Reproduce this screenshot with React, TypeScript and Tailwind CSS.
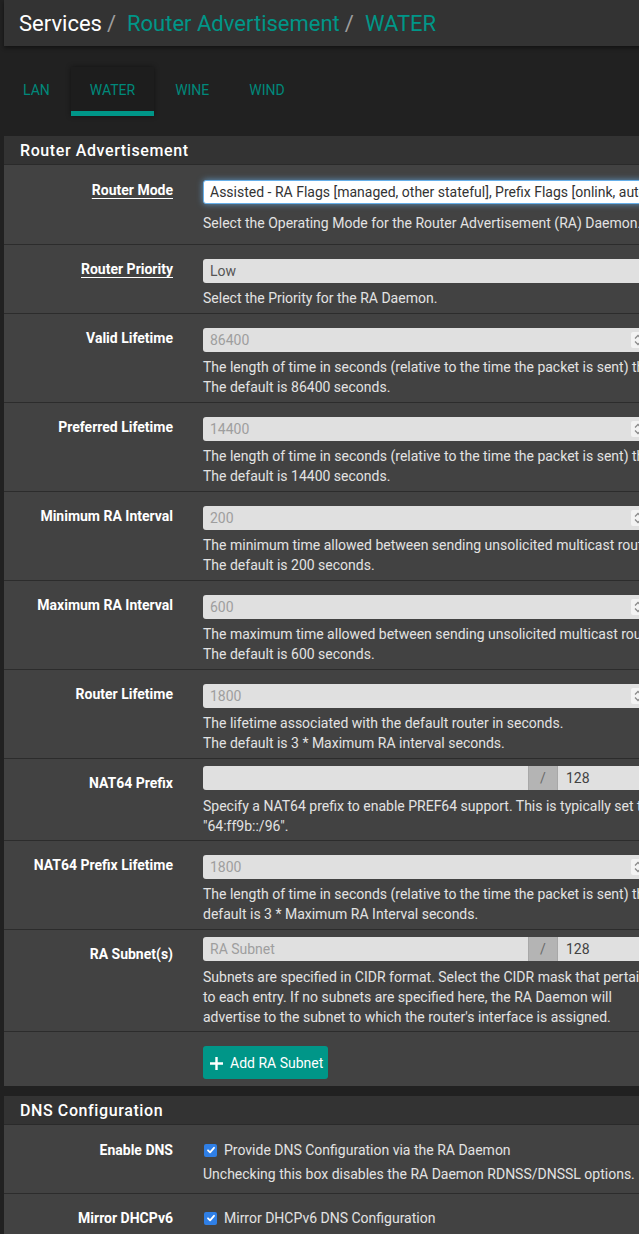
import React from "react";

function Spinner() {
  return (
    <div className="absolute left-[428px] top-[4px] w-[14px] h-[16px] bg-[#f3f3f3] rounded-[2px] flex items-center justify-center">
      <svg width="8" height="12" viewBox="0 0 8 12" fill="none" stroke="#8a8a8a" strokeWidth="1.3">
        <path d="M1 4.5 L4 1.5 L7 4.5" />
        <path d="M1 7.5 L4 10.5 L7 7.5" />
      </svg>
    </div>
  );
}

function NumInput({ value }: { value: string }) {
  return (
    <div className="relative h-[24px] w-[447px] bg-[#e0e0e0] rounded-[3px] text-[14px] text-[#9e9e9e] pl-[7px] flex items-center">
      {value}
      <Spinner />
    </div>
  );
}

function Help({ lines, cls }: { lines: string[]; cls: string }) {
  return (
    <div className={cls}>
      {lines.map((l, i) => (
        <div key={i} className="whitespace-nowrap text-[14px] leading-[20px] text-[#e3e3e3]">
          {l}
        </div>
      ))}
    </div>
  );
}

function Label({ text, underline, first }: { text: string; underline?: boolean; first?: boolean }) {
  return (
    <div
      className={
        first
          ? "w-[184px] shrink-0 pr-[15px] pt-[15px] text-right text-[14px] leading-[20px] font-bold text-white"
          : "w-[184px] shrink-0 pr-[15px] pt-[14px] text-right text-[14px] leading-[20px] font-bold text-white"
      }
    >
      <span className={underline ? "underline decoration-1 underline-offset-[3px]" : ""}>{text}</span>
    </div>
  );
}

function NumRow({ label, value, lines }: { label: string; value: string; lines: string[] }) {
  return (
    <div className="flex border-t border-[#2c2c2c]">
      <Label text={label} />
      <div className="pl-[15px] pt-[14px] pb-[5px]">
        <NumInput value={value} />
        <Help lines={lines} cls="mt-[5px]" />
      </div>
    </div>
  );
}

function GroupInput({ placeholder }: { placeholder: string }) {
  return (
    <div className="flex h-[24px] text-[14px]">
      <div className="w-[325px] bg-[#e0e0e0] rounded-l-[3px] pl-[7px] flex items-center text-[#9e9e9e]">
        {placeholder}
      </div>
      <div className="w-[30px] bg-[#b4b4b4] border-x border-[#a8a8a8] flex items-center justify-center text-[#6a6a6a]">
        /
      </div>
      <div className="w-[200px] bg-[#e0e0e0] pl-[8px] flex items-center text-[#424242]">128</div>
    </div>
  );
}

function Check() {
  return (
    <div className="w-[13px] h-[13px] rounded-[2px] bg-[#2f7fe6] flex items-center justify-center shrink-0">
      <svg width="10" height="10" viewBox="0 0 10 10" fill="none" stroke="white" strokeWidth="1.8" strokeLinecap="round" strokeLinejoin="round">
        <path d="M2 5.3 L4.1 7.4 L8 2.8" />
      </svg>
    </div>
  );
}

const LEN = "The length of time in seconds (relative to the time the packet is sent) that the prefix is valid for the purpose of on-link determination.";
const LEN2 = "The length of time in seconds (relative to the time the packet is sent) that addresses generated from the prefix via stateless address autoconfiguration remain preferred.";

export default function App() {
  return (
    <div className="w-[639px] h-[1234px] overflow-hidden bg-[#212121] font-['Roboto',sans-serif]">
      <div className="w-[1000px] pl-[4px]">
        {/* Breadcrumb header */}
        <div className="h-[46px] bg-[#333333] shadow-[0_2px_4px_rgba(0,0,0,0.45)] flex items-center pl-[15px] pt-[2px] text-[22px] leading-none">
          <span className="text-white">Services</span>
          <span className="text-[#9e9e9e] ml-[5px] mr-[11px]">/</span>
          <span className="text-[#009688]">Router Advertisement</span>
          <span className="text-[#9e9e9e] ml-[5px] mr-[11px]">/</span>
          <span className="text-[#009688]">WATER</span>
        </div>

        {/* Tabs */}
        <div className="flex mt-[21px] h-[49px] gap-[2px] text-[14px] text-[#00897b]">
          <div className="px-[19px] flex items-center pt-[3px] pb-[5px]">LAN</div>
          <div className="px-[19px] flex items-center pt-[3px] bg-[#1d1d1d] border-b-[5px] border-[#009688] shadow-[0_0_5px_rgba(0,0,0,0.45)]">
            WATER
          </div>
          <div className="px-[19px] flex items-center pt-[3px] pb-[5px]">WINE</div>
          <div className="px-[19px] flex items-center pt-[3px] pb-[5px]">WIND</div>
        </div>

        {/* Router Advertisement panel */}
        <div className="mt-[20px] bg-[#424242]">
          <div className="h-[29px] bg-[#333333] border-b border-[#2a2a2a] pl-[16px] pt-[2px] flex items-center text-[16px] font-medium tracking-[0.6px] text-white">
            Router Advertisement
          </div>

          {/* Router Mode */}
          <div className="flex">
            <Label text="Router Mode" underline first />
            <div className="pl-[15px] pt-[15px] pb-[11px]">
              <div className="h-[24px] w-[600px] bg-white border border-[#66afe9] rounded-[3px] shadow-[0_0_6px_rgba(102,175,233,0.75)] pl-[6px] flex items-center text-[14px] text-[#333] whitespace-nowrap">
                Assisted - RA Flags [managed, other stateful], Prefix Flags [onlink, auto, router]
              </div>
              <Help lines={["Select the Operating Mode for the Router Advertisement (RA) Daemon."]} cls="mt-[9px]" />
            </div>
          </div>

          {/* Router Priority */}
          <div className="flex border-t border-[#2c2c2c]">
            <Label text="Router Priority" underline />
            <div className="pl-[15px] pt-[14px] pb-[5px]">
              <div className="h-[24px] w-[600px] bg-[#e0e0e0] rounded-[3px] pl-[7px] flex items-center text-[14px] text-[#555]">
                Low
              </div>
              <Help lines={["Select the Priority for the RA Daemon."]} cls="mt-[5px]" />
            </div>
          </div>

          <NumRow label="Valid Lifetime" value="86400" lines={[LEN, "The default is 86400 seconds."]} />
          <NumRow label="Preferred Lifetime" value="14400" lines={[LEN2, "The default is 14400 seconds."]} />
          <NumRow
            label="Minimum RA Interval"
            value="200"
            lines={["The minimum time allowed between sending unsolicited multicast router advertisements in seconds.", "The default is 200 seconds."]}
          />
          <NumRow
            label="Maximum RA Interval"
            value="600"
            lines={["The maximum time allowed between sending unsolicited multicast router advertisements in seconds.", "The default is 600 seconds."]}
          />
          <NumRow
            label="Router Lifetime"
            value="1800"
            lines={["The lifetime associated with the default router in seconds.", "The default is 3 * Maximum RA interval seconds."]}
          />

          {/* NAT64 Prefix */}
          <div className="flex border-t border-[#2c2c2c]">
            <Label text="NAT64 Prefix" />
            <div className="pl-[15px] pt-[7px] pb-[4px]">
              <GroupInput placeholder="" />
              <Help
                lines={[
                  "Specify a NAT64 prefix to enable PREF64 support. This is typically set to the well-known prefix",
                  "\"64:ff9b::/96\".",
                ]}
                cls="mt-[6px]"
              />
            </div>
          </div>

          <NumRow
            label="NAT64 Prefix Lifetime"
            value="1800"
            lines={[
              "The length of time in seconds (relative to the time the packet is sent) that the NAT64 prefix is valid. The",
              "default is 3 * Maximum RA Interval seconds.",
            ]}
          />

          {/* RA Subnets */}
          <div className="flex border-t border-[#2c2c2c]">
            <Label text="RA Subnet(s)" />
            <div className="pl-[15px] pt-[7px] pb-[4px]">
              <GroupInput placeholder="RA Subnet" />
              <Help
                lines={[
                  "Subnets are specified in CIDR format. Select the CIDR mask that pertains",
                  "to each entry. If no subnets are specified here, the RA Daemon will",
                  "advertise to the subnet to which the router's interface is assigned.",
                ]}
                cls="mt-[6px]"
              />
            </div>
          </div>

          {/* Add button */}
          <div className="flex border-t border-[#2c2c2c]">
            <div className="w-[184px] shrink-0" />
            <div className="pl-[15px] pt-[14px] pb-[7px]">
              <div className="h-[33px] w-[125px] bg-[#009688] rounded-[3px] flex items-center pl-[6px] gap-[6px] pt-[1px] text-[14px] text-white">
                <svg width="15" height="15" viewBox="0 0 15 15" fill="none" stroke="white" strokeWidth="2.4">
                  <path d="M7.5 1 V14 M1 7.5 H14" />
                </svg>
                Add RA Subnet
              </div>
            </div>
          </div>
        </div>

        {/* DNS Configuration panel */}
        <div className="mt-[10px] bg-[#424242]">
          <div className="h-[29px] bg-[#333333] border-b border-[#2a2a2a] pl-[16px] pt-[2px] flex items-center text-[16px] font-medium tracking-[0.6px] text-white">
            DNS Configuration
          </div>

          <div className="flex">
            <Label text="Enable DNS" first />
            <div className="pl-[15px] pt-[15px] pb-[9px]">
              <div className="flex items-center h-[20px] gap-[7px] pl-[1px] text-[14px] text-[#e3e3e3]">
                <Check />
                <span>Provide DNS Configuration via the RA Daemon</span>
              </div>
              <Help lines={["Unchecking this box disables the RA Daemon RDNSS/DNSSL options."]} cls="mt-[4px]" />
            </div>
          </div>

          <div className="flex border-t border-[#2c2c2c]">
            <Label text="Mirror DHCPv6" />
            <div className="pl-[15px] pt-[14px] pb-[20px]">
              <div className="flex items-center h-[20px] gap-[7px] pl-[1px] text-[14px] text-[#e3e3e3]">
                <Check />
                <span>Mirror DHCPv6 DNS Configuration</span>
              </div>
            </div>
          </div>
        </div>
      </div>
    </div>
  );
}
